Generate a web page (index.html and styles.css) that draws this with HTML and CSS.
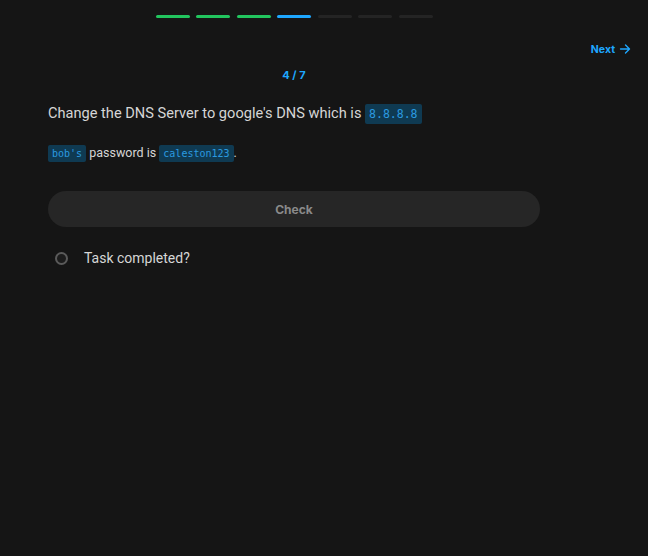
FILE: index.html
```html
<!DOCTYPE html>
<html>
<head>
<meta charset="utf-8">
<link rel="stylesheet" href="styles.css">
</head>
<body>
<div class="progress">
  <span class="seg done"></span>
  <span class="seg done"></span>
  <span class="seg done"></span>
  <span class="seg current"></span>
  <span class="seg"></span>
  <span class="seg"></span>
  <span class="seg"></span>
</div>
<div class="topbar">
  <a class="next">Next
    <svg width="12" height="12" viewBox="0 0 12 12" fill="none" stroke="currentColor" stroke-width="1.4" stroke-linecap="round" stroke-linejoin="round"><path d="M1.5 6h9M6.5 2l4 4-4 4"/></svg>
  </a>
</div>
<main class="content">
  <div class="counter">4 / 7</div>
  <p class="task">Change the DNS Server to google's DNS which is <code>8.8.8.8</code></p>
  <p class="note"><code>bob's</code> password is <code>caleston123</code>.</p>
  <button class="check">Check</button>
  <label class="done-row"><span class="radio"></span><span>Task completed?</span></label>
</main>
</body>
</html>
```
FILE: styles.css
```css
html, body {
  margin: 0;
  padding: 0;
  background: #151515;
  font-family: Inter, "Noto Sans", sans-serif;
  color: #d4d4d4;
}
.progress {
  display: flex;
  gap: 6.5px;
  width: 492px;
  margin-left: 48px;
  justify-content: center;
  padding-top: 15px;
}
.seg {
  width: 34px;
  height: 3px;
  border-radius: 2px;
  background: #242424;
}
.seg.done { background: #22c55e; }
.seg.current { background: #1ea7ff; }
.topbar {
  display: flex;
  justify-content: flex-end;
  padding: 23px 17px 0 0;
  height: 16px;
}
.next {
  display: flex;
  align-items: center;
  gap: 4px;
  color: #1ea7ff;
  font-size: 10.5px;
  font-weight: 700;
}
.content {
  width: 492px;
  margin-left: 48px;
}
.counter {
  text-align: center;
  color: #1ea7ff;
  font-size: 11px;
  font-weight: 700;
  margin-top: 10px;
  height: 16px;
  line-height: 16px;
}
.task {
  margin: 18px 0 0;
  font-family: Roboto, "Noto Sans", sans-serif;
  font-size: 14.6px;
  line-height: 24px;
  color: #d6d6d6;
}
.note {
  margin: 17px 0 0;
  font-family: Roboto, "Noto Sans", sans-serif;
  font-size: 12.5px;
  line-height: 20px;
  color: #d6d6d6;
}
code {
  font-family: "DejaVu Sans Mono", "Liberation Mono", monospace;
  font-size: 10px;
  color: #2b9ae0;
  background: #0f3a52;
  border-radius: 2px;
  padding: 3px 4px;
}
.task code { font-size: 11.5px; padding: 3px 4px; }
.check {
  display: block;
  width: 492px;
  height: 36px;
  margin-top: 27px;
  border: none;
  border-radius: 18px;
  background: #262626;
  color: #8a8a8a;
  font-family: Inter, "Noto Sans", sans-serif;
  font-size: 12px;
  font-weight: 700;
}
.done-row {
  display: flex;
  align-items: center;
  gap: 16px;
  margin-top: 23px;
  margin-left: 7px;
  font-family: Roboto, "Noto Sans", sans-serif;
  font-size: 14px;
  color: #d6d6d6;
}
.radio {
  width: 9px;
  height: 9px;
  border: 2px solid #5a5a5a;
  border-radius: 50%;
  background: #1c1c1c;
}
```
